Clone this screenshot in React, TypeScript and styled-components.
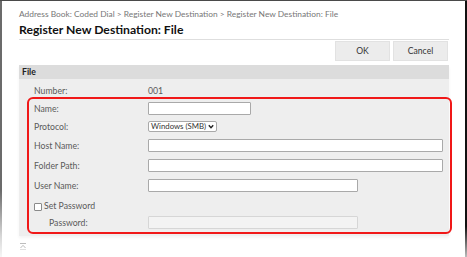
import React from "react";
import styled, { createGlobalStyle } from "styled-components";

const Global = createGlobalStyle`
  html, body { margin: 0; padding: 0; background: #fff; }
  body { font-family: Lato, "Open Sans", "Liberation Sans", sans-serif; }
  * { box-sizing: border-box; }
`;

const Window = styled.div`
  display: flex;
  width: 467px;
  height: 257px;
  border-top: 1px solid #4a4a4a;
  background: #fff;
  overflow: hidden;
`;

const LeftEdge = styled.div`
  width: 2px;
  flex: none;
  background: linear-gradient(to bottom, #6b6b6b 0%, #6b6b6b 74%, #d8d8d8 92%, #f6f6f6 100%);
`;

const RightEdge = styled.div`
  width: 2px;
  flex: none;
  background: linear-gradient(to bottom, #111 0%, #111 88%, #bbb 100%);
`;

const Content = styled.div`
  flex: 1;
  padding: 7px 16px 0 17px;
  display: flex;
  flex-direction: column;
  min-width: 0;
`;

const Breadcrumb = styled.div`
  font-size: 8.4px;
  line-height: 12px;
  height: 12px;
  color: #777;
  white-space: nowrap;
`;

const Title = styled.h1`
  margin: 0;
  font-size: 12.2px;
  font-weight: 700;
  line-height: 16px;
  height: 20px;
  padding-top: 2px;
  color: #111;
  border-bottom: 1px solid #dedede;
  white-space: nowrap;
`;

const ButtonBar = styled.div`
  display: flex;
  justify-content: flex-end;
  gap: 3px;
  padding: 1px 1px 0 0;
`;

const Button = styled.button`
  width: 55px;
  height: 20px;
  border: 1px solid #e2e2e2;
  background: #ececec;
  font-family: inherit;
  font-size: 8.6px;
  color: #333;
  padding: 0;
`;

const Section = styled.section`
  margin-top: 4px;
  display: flex;
  flex-direction: column;
  box-shadow: 0 2px 3px rgba(0, 0, 0, 0.05);
`;

const SectionHeader = styled.div`
  height: 14px;
  background: #dcdcdc;
  font-size: 8.7px;
  font-weight: 700;
  line-height: 14px;
  padding-left: 3px;
  color: #222;
`;

const Body = styled.div`
  background: #eeeeee;
  padding: 4px 0 2px 0;
  display: flex;
  flex-direction: column;
`;

const Row = styled.div<{ $h: number; $indent?: number }>`
  display: flex;
  align-items: center;
  height: ${(p) => p.$h}px;
  padding-left: ${(p) => p.$indent ?? 0}px;
`;

const Label = styled.div<{ $w: number }>`
  width: ${(p) => p.$w}px;
  flex: none;
  font-size: 8.7px;
  color: #5a5a5a;
  white-space: nowrap;
`;

const Value = styled.div`
  font-size: 8.7px;
  color: #5a5a5a;
`;

const Highlight = styled.div`
  margin-left: 8px;
  width: 425px;
  border: 2px solid #f01818;
  border-radius: 6px;
  padding: 0 0 2px 5px;
  display: flex;
  flex-direction: column;
`;

const TextInput = styled.div<{ $w: number; $disabled?: boolean }>`
  width: ${(p) => p.$w}px;
  height: 13px;
  border: 1px solid ${(p) => (p.$disabled ? "#d6d6d6" : "#a9a9a9")};
  background: ${(p) => (p.$disabled ? "#f3f3f3" : "#fff")};
  border-radius: 1px;
`;

const Select = styled.div`
  width: 69px;
  height: 11px;
  border: 1px solid #a9a9a9;
  background: #fff;
  border-radius: 2px;
  display: flex;
  align-items: center;
  justify-content: space-between;
  padding: 0 2px 0 2px;
  font-size: 7.8px;
  line-height: 9px;
  color: #333;
  white-space: nowrap;
  overflow: hidden;

  svg {
    flex: none;
  }
`;

const CheckLabel = styled.label`
  display: flex;
  align-items: center;
  gap: 2px;
  font-size: 8.7px;
  color: #5a5a5a;
  white-space: nowrap;
`;

const CheckBox = styled.span`
  width: 8px;
  height: 8px;
  border: 1px solid #8a8a8a;
  background: #fff;
  border-radius: 1px;
  display: inline-block;
  margin-top: 3px;
`;

const Footer = styled.div`
  padding: 7px 0 0 1px;
  display: flex;
`;

const Chevron = () => (
  <svg width="6" height="5" viewBox="0 0 6 5">
    <polyline points="0.8,1.2 3,3.6 5.2,1.2" fill="none" stroke="#222" strokeWidth="1.4" />
  </svg>
);

const TopIcon = () => (
  <svg width="6" height="7" viewBox="0 0 6 7">
    <line x1="0" y1="0.5" x2="6" y2="0.5" stroke="#bdbdbd" strokeWidth="1" />
    <polyline points="0.5,5 3,2.3 5.5,5" fill="none" stroke="#bdbdbd" strokeWidth="1" />
    <line x1="0" y1="6.5" x2="6" y2="6.5" stroke="#e0e0e0" strokeWidth="1" />
  </svg>
);

export default function App() {
  return (
    <>
      <Global />
      <Window>
        <LeftEdge />
        <Content>
          <Breadcrumb>
            Address Book: Coded Dial &gt; Register New Destination &gt; Register New Destination: File
          </Breadcrumb>
          <Title>Register New Destination: File</Title>
          <ButtonBar>
            <Button>OK</Button>
            <Button>Cancel</Button>
          </ButtonBar>
          <Section>
            <SectionHeader>File</SectionHeader>
            <Body>
              <Row $h={14} $indent={15}>
                <Label $w={114}>Number:</Label>
                <Value>001</Value>
              </Row>
              <Highlight>
                <Row $h={18}>
                  <Label $w={114}>Name:</Label>
                  <TextInput $w={103} />
                </Row>
                <Row $h={18}>
                  <Label $w={114}>Protocol:</Label>
                  <Select>
                    <span>Windows (SMB)</span>
                    <Chevron />
                  </Select>
                </Row>
                <Row $h={20}>
                  <Label $w={114}>Host Name:</Label>
                  <TextInput $w={295} />
                </Row>
                <Row $h={20}>
                  <Label $w={114}>Folder Path:</Label>
                  <TextInput $w={295} />
                </Row>
                <Row $h={20}>
                  <Label $w={114}>User Name:</Label>
                  <TextInput $w={210} />
                </Row>
                <Row $h={20}>
                  <CheckLabel>
                    <CheckBox />
                    Set Password
                  </CheckLabel>
                </Row>
                <Row $h={15} $indent={15}>
                  <Label $w={99}>Password:</Label>
                  <TextInput $w={210} $disabled />
                </Row>
              </Highlight>
            </Body>
          </Section>
          <Footer>
            <TopIcon />
          </Footer>
        </Content>
        <RightEdge />
      </Window>
    </>
  );
}
